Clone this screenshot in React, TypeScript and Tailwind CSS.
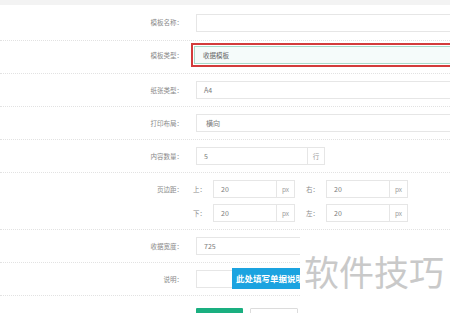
import React from 'react';

const font = { fontFamily: '"Noto Sans CJK SC", "Noto Sans", sans-serif' };

const Label: React.FC<{ text: string }> = ({ text }) => (
  <div className="w-[183px] shrink-0 text-right text-[6.5px] text-[#8a8a8a] leading-none">{text}</div>
);

const Input: React.FC<{ value?: string; className?: string }> = ({ value, className }) => (
  <div
    className={`h-[18px] shrink-0 border border-[#e6e6e6] bg-white flex items-center pl-[7px] text-[7px] text-[#7a7a7a] leading-none ${className ?? ''}`}
  >
    {value}
  </div>
);

const Addon: React.FC<{ text: string; className?: string }> = ({ text, className }) => (
  <div
    className={`h-[18px] shrink-0 border border-l-0 border-[#e6e6e6] bg-white flex items-center justify-center text-[6.5px] text-[#999] leading-none ${className ?? ''}`}
  >
    {text}
  </div>
);

const Row: React.FC<{ className?: string; children: React.ReactNode }> = ({ className, children }) => (
  <div className={`flex border-b border-dotted border-[#e2e2e2] ${className ?? ''}`}>{children}</div>
);

const MarginField: React.FC<{ side: string; value: string; className?: string }> = ({ side, value, className }) => (
  <div className={`flex items-center ${className ?? ''}`}>
    <span className="w-[20px] text-[6.5px] text-[#8a8a8a] leading-none">{side}</span>
    <Input value={value} className="w-[64px]" />
    <Addon text="px" className="w-[18px]" />
  </div>
);

export default function App() {
  return (
    <div className="relative w-[450px] h-[313px] overflow-hidden bg-white" style={font}>
      <div className="h-[5px] bg-[#f3f3f3]" />

      <Row className="h-[36px] items-center">
        <Label text="模板名称：" />
        <Input className="ml-[13px] w-[300px]" />
      </Row>

      <Row className="h-[33px] items-start pt-[2px]">
        <div className="h-[24px] flex items-center">
          <Label text="模板类型：" />
        </div>
        <div className="ml-[8px] h-[24px] w-[300px] shrink-0 border-2 border-[#d33b3b] p-[1px]">
          <div className="h-full border border-[#a6d9c9] bg-[#f5fbfa] flex items-center pl-[8px] text-[6.5px] text-[#666] leading-none">
            收据模板
          </div>
        </div>
      </Row>

      <Row className="h-[33px] items-center">
        <Label text="纸张类型：" />
        <Input value="A4" className="ml-[13px] w-[300px]" />
      </Row>

      <Row className="h-[33px] items-center">
        <Label text="打印布局：" />
        <Input value="横向" className="ml-[13px] w-[300px] pl-[9px] text-[6.5px]" />
      </Row>

      <Row className="h-[33px] items-center">
        <Label text="内容数量：" />
        <Input value="5" className="ml-[13px] w-[112px]" />
        <Addon text="行" className="w-[17px]" />
      </Row>

      <Row className="h-[57px] items-start pt-[7px]">
        <div className="h-[18px] flex items-center">
          <Label text="页边距：" />
        </div>
        <div className="ml-[10px] flex flex-col gap-[6px]">
          <div className="flex">
            <MarginField side="上：" value="20" />
            <MarginField side="右：" value="20" className="ml-[11px]" />
          </div>
          <div className="flex">
            <MarginField side="下：" value="20" />
            <MarginField side="左：" value="20" className="ml-[11px]" />
          </div>
        </div>
      </Row>

      <Row className="h-[33px] items-center">
        <Label text="收据宽度：" />
        <Input value="725" className="ml-[13px] w-[300px]" />
      </Row>

      <Row className="relative h-[33px] items-center">
        <Label text="说明：" />
        <Input className="ml-[13px] w-[300px]" />
        <div className="absolute left-[232px] top-[5px] h-[21px] w-[90px] bg-[#1ba3e0] flex items-center pl-[4px] text-[8.5px] font-bold text-white whitespace-nowrap leading-none">
          此处填写单据说明
        </div>
      </Row>

      <div className="flex pt-[12px] pl-[196px] gap-[7px]">
        <div className="h-[22px] w-[47px] bg-[#1aaf80] rounded-[1px]" />
        <div className="h-[22px] w-[48px] border border-[#dcdcdc] bg-white rounded-[1px]" />
      </div>

      <div className="absolute left-[300px] top-[233px] right-0 bottom-0 bg-white flex items-start pt-[20px] pl-[4px]">
        <span className="text-[35px] leading-none text-[#c9c9c9] whitespace-nowrap">软件技巧</span>
      </div>
    </div>
  );
}
